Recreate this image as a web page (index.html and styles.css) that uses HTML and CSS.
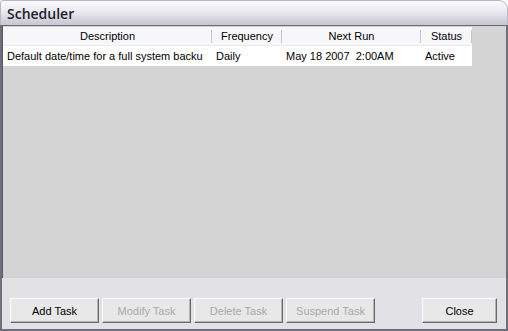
FILE: index.html
```html
<!DOCTYPE html>
<html>
<head>
<meta charset="utf-8">
<link rel="stylesheet" href="styles.css">
</head>
<body>
<div class="window">
  <div class="titlebar">Scheduler</div>
  <div class="frame">
    <div class="list">
      <div class="row header">
        <div class="cell c-desc">Description</div>
        <div class="cell c-freq">Frequency</div>
        <div class="cell c-next">Next Run</div>
        <div class="cell c-stat">Status</div>
      </div>
      <div class="row data">
        <div class="cell c-desc">Default date/time for a full system backu</div>
        <div class="cell c-freq">Daily</div>
        <div class="cell c-next">May 18 2007&nbsp; 2:00AM</div>
        <div class="cell c-stat">Active</div>
      </div>
    </div>
    <div class="buttons">
      <button class="btn">Add Task</button>
      <button class="btn disabled">Modify Task</button>
      <button class="btn disabled">Delete Task</button>
      <button class="btn disabled">Suspend Task</button>
      <span class="spacer"></span>
      <button class="btn close">Close</button>
    </div>
  </div>
</div>
</body>
</html>
```

FILE: styles.css
```css
html, body {
  margin: 0;
  padding: 0;
  background: #ffffff;
}
.window {
  width: 508px;
  height: 331px;
  display: flex;
  flex-direction: column;
  font-family: "Liberation Sans", Arial, sans-serif;
  font-size: 11px;
  color: #000;
}
.titlebar {
  height: 25px;
  box-sizing: border-box;
  padding: 3px 0 0 6px;
  font-family: "Open Sans", "Liberation Sans", sans-serif;
  font-weight: 600;
  font-size: 14px;
  color: #1e1e2a;
  background: linear-gradient(to bottom, #fbfbfd 0%, #e9e9f0 45%, #c6c6d4 100%);
  border-top-left-radius: 4px;
  border-top-right-radius: 9px;
  border: 1px solid #b8b8c6;
  border-bottom: none;
  line-height: 19px;
}
.frame {
  flex: 1;
  display: flex;
  flex-direction: column;
  background: #e2e1e6;
  border-left: 2px solid #6e6e7c;
  border-right: 2px solid #6e6e7c;
  border-bottom: 2px solid #6e6e7c;
}
.list {
  height: 253px;
  background: #d4d4d4;
  border-top: 1px solid #6a6a6a;
  border-left: 1px solid #5a5a5a;
  box-sizing: border-box;
  padding-top: 1px;
}
.row {
  display: flex;
  width: 469px;
}
.header {
  height: 18px;
  background: #f7f7fa;
  border-bottom: 1px solid #ececf0;
  line-height: 18px;
}
.header .cell {
  text-align: center;
  position: relative;
}
.header .cell::after {
  content: "";
  position: absolute;
  right: 0;
  top: 3px;
  height: 13px;
  width: 1px;
  background: #c4c4cc;
}
.data {
  height: 20px;
  background: #ffffff;
  line-height: 20px;
}
.cell {
  box-sizing: border-box;
  white-space: nowrap;
  overflow: hidden;
}
.c-desc { width: 209px; }
.c-freq { width: 70px; }
.c-next { width: 139px; }
.c-stat { width: 51px; }
.data .c-desc { padding-left: 4px; }
.data .c-freq { padding-left: 4px; }
.data .c-next { padding-left: 4px; }
.data .c-stat { padding-left: 4px; }
.buttons {
  flex: 1;
  display: flex;
  align-items: flex-start;
  padding: 20px 9px 0 8px;
  gap: 3px;
}
.btn {
  height: 25px;
  width: 89px;
  font-family: "Liberation Sans", Arial, sans-serif;
  font-size: 11px;
  color: #000;
  background: #e8e8e8;
  border: 1px solid;
  border-color: #ffffff #6a6a6a #6a6a6a #ffffff;
  box-shadow: inset -1px -1px 0 #b5b5b5;
  padding: 0;
  margin: 0;
}
.btn.disabled {
  color: #a8a8a8;
}
.btn.close {
  width: 75px;
}
.spacer {
  flex: 1;
}
```
